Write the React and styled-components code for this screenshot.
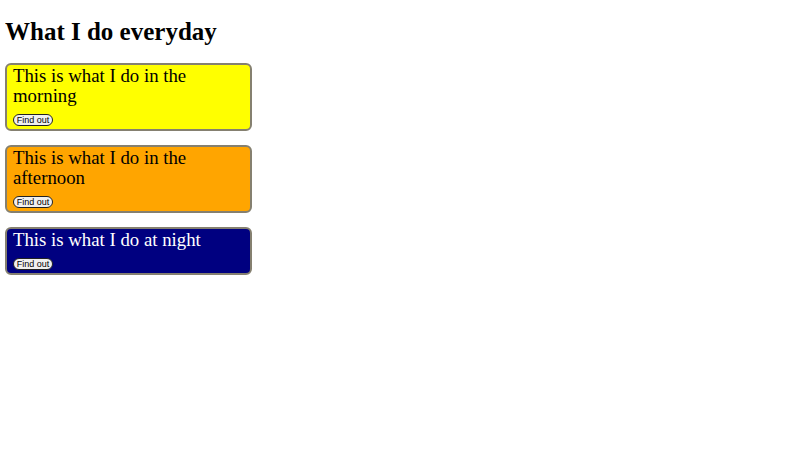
import React from "react";
import styled, { createGlobalStyle } from "styled-components";

const GlobalStyle = createGlobalStyle`
  body {
    margin: 0;
    padding: 5px;
    font-family: "Liberation Serif", "Times New Roman", serif;
    background: #ffffff;
  }
`;

const Title = styled.h1`
  font-size: 25px;
  line-height: 30px;
  font-weight: 700;
  margin: 12px 0 16px;
  color: #000;
`;

const List = styled.div`
  display: flex;
  flex-direction: column;
  gap: 14px;
`;

const Card = styled.div`
  box-sizing: border-box;
  width: 247px;
  display: flex;
  flex-direction: column;
  align-items: flex-start;
  padding: 1px 6px 3px;
  border: 2px solid #858070;
  border-radius: 6px;
  background-color: ${(props) => props.bg};
  color: ${(props) => props.color || "#000"};
`;

const CardText = styled.p`
  margin: 0 0 8px;
  font-size: 18.8px;
  line-height: 20px;
`;

const FindBtn = styled.button`
  box-sizing: border-box;
  display: flex;
  align-items: center;
  justify-content: center;
  height: 12px;
  width: 40px;
  padding: 0;
  font-family: "Liberation Sans", Arial, sans-serif;
  font-size: 9px;
  line-height: 1;
  border: 1.5px solid #222;
  border-radius: 6px;
  background: #f0f0f0;
  color: #000;
`;

const items = [
  { text: "This is what I do in the morning", bg: "#ffff00" },
  { text: "This is what I do in the afternoon", bg: "#ffa500" },
  { text: "This is what I do at night", bg: "#000080", color: "#ffffff" },
];

const App = () => {
  return (
    <>
      <GlobalStyle />
      <Title>What I do everyday</Title>
      <List>
        {items.map((item) => (
          <Card key={item.text} bg={item.bg} color={item.color}>
            <CardText>{item.text}</CardText>
            <FindBtn>Find out</FindBtn>
          </Card>
        ))}
      </List>
    </>
  );
};

export default App;
